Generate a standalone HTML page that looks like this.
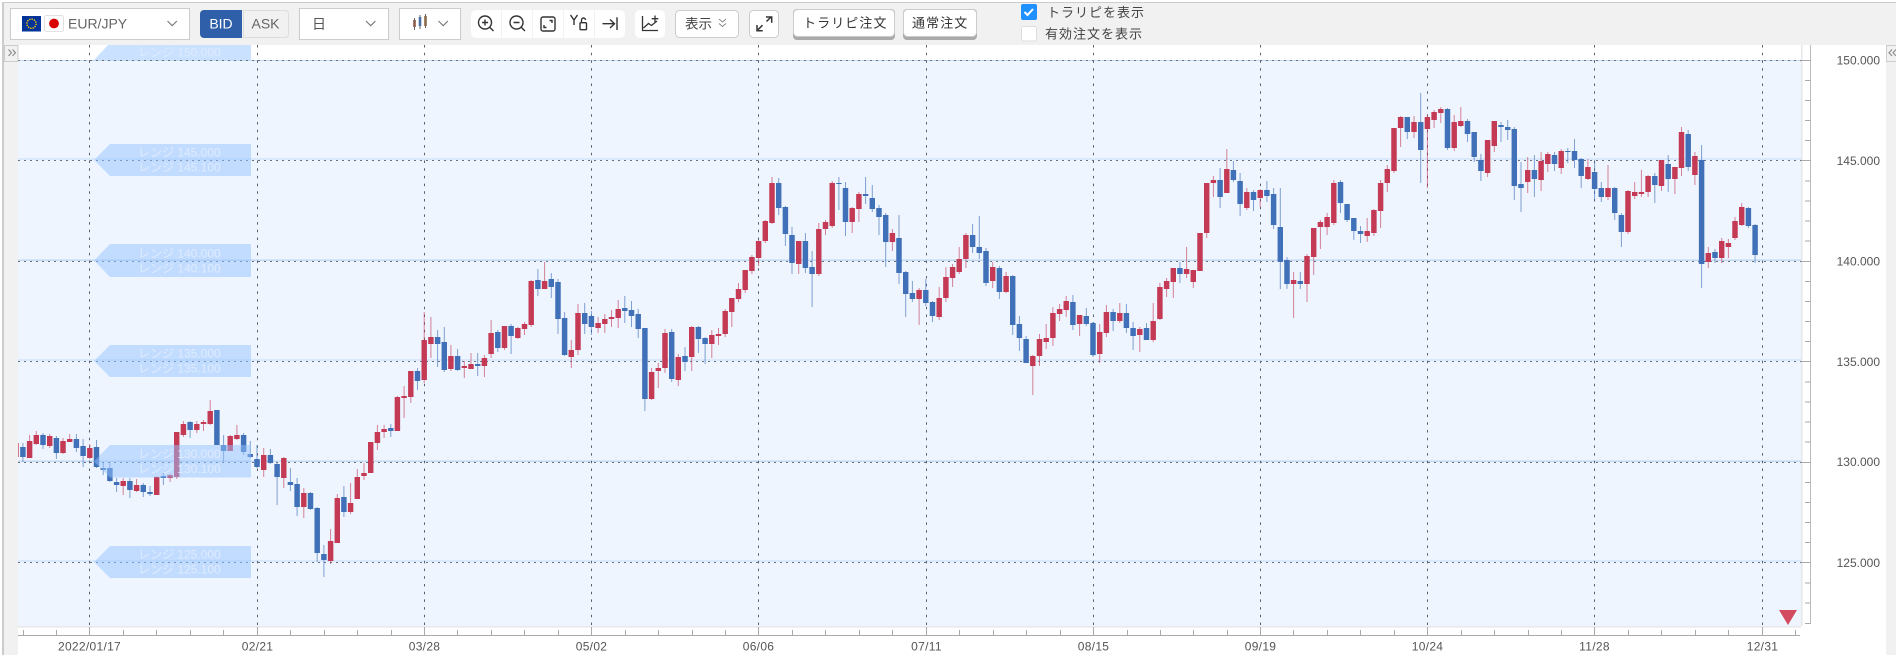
<!DOCTYPE html>
<html lang="ja"><head><meta charset="utf-8"><title>EUR/JPY</title>
<style>html,body{margin:0;padding:0;background:#fff;width:1896px;height:655px;overflow:hidden}svg{display:block}text{font-family:"Liberation Sans","Noto Sans CJK JP",sans-serif}</style></head><body>
<svg width="1896" height="655" viewBox="0 0 1896 655" xmlns="http://www.w3.org/2000/svg">
<defs><clipPath id="cp"><rect x="18" y="45" width="1783" height="581"/></clipPath><clipPath id="cr"><rect x="1886" y="45" width="10" height="17"/></clipPath></defs>
<rect width="1896" height="655" fill="#fff"/>
<rect x="3" y="2" width="1893" height="43" fill="#f1f1f1"/><rect x="2" y="2" width="1894" height="1" fill="#ccc"/>
<rect x="2" y="2" width="2" height="653" fill="#ccc"/><rect x="4" y="45" width="14" height="610" fill="#f1f1f1"/>
<rect x="1886" y="45" width="10" height="610" fill="#f1f1f1"/>
<!-- chart background -->
<rect x="18" y="60" width="1783" height="566" fill="#eef5ff"/>
<g fill="#d9e8fb"><rect x="18" y="158" width="1783" height="2"/><rect x="18" y="359" width="1783" height="2"/><rect x="18" y="560" width="1783" height="2"/></g>
<g fill="#c3d9f2"><rect x="18" y="60" width="1783" height="1"/><rect x="18" y="259.5" width="1783" height="1.5"/><rect x="18" y="460.5" width="1783" height="1.5"/></g>
<path d="M89.5 45V626M257.5 45V626M424.5 45V626M591.5 45V626M758.5 45V626M926.5 45V626M1093.5 45V626M1260.5 45V626M1427.5 45V626M1594.5 45V626M1762.5 45V626" stroke="#5a5f68" stroke-width="1" stroke-dasharray="2.5 5.2" fill="none"/>
<path d="M18 60.5H1801M18 160.5H1801M18 261.5H1801M18 361.5H1801M18 462.5H1801M18 562.5H1801" stroke="#66717f" stroke-width="1" stroke-dasharray="2 4" fill="none"/>
<!-- candles -->
<g clip-path="url(#cp)" fill="none" transform="translate(.3 0)">
<path id="rw" stroke="#c43a55" stroke-width="1" opacity=".62" d="M15.9 437V459M29.3 435V458M36 431V445M49.4 434V448M62.7 438V454M69.4 434V442M89.5 444V459M122.9 478V495M136.3 479V492M156.4 476V495M169.8 474V482M176.4 432V479M183.1 421V437M196.5 421V433M203.2 420V431M209.9 400V425M229.9 435V451M236.6 425V440M263.4 448V477M283.5 457V488M303.5 488V518M330.3 529V564M337 494V543M350.3 483V514M357 469V499M363.7 463V480M370.4 442V473M377.1 425V450M383.8 425V438M397.1 396V431M403.8 386V418M410.5 371V403M423.9 312V383M430.6 317V358M450.6 345V371M464 361V378M470.7 353V369M484.1 355V377M490.8 320V358M504.2 326V350M517.5 327V339M524.2 322V335M530.9 280V327M544.3 262V289M571 340V368M577.7 304V355M597.8 317V333M604.5 314V333M611.2 310V327M617.9 300V328M651.3 368V400M658 363V388M664.7 329V373M678 354V386M691.4 326V371M711.5 330V358M718.2 328V345M724.9 309V337M731.5 298V327M738.2 283V302M744.9 270V293M751.6 255V274M758.3 240V266M765 220V243M771.7 177V224M798.4 241V274M818.5 223V276M825.2 220V235M831.9 181V228M851.9 207V233M858.6 192V222M892.1 229V251M918.8 288V325M938.9 287V320M945.6 267V302M952.3 264V287M958.9 247V274M965.6 233V268M992.4 262V288M1005.8 272V293M1032.5 355V395M1039.2 334V366M1045.9 324V349M1052.6 307V346M1059.3 304V321M1065.9 296V317M1079.3 315V336M1099.4 324V363M1106.1 305V337M1119.5 303V323M1139.5 327V352M1152.9 303V342M1159.6 283V320M1166.3 278V297M1173 268V298M1186.3 247V278M1193 270V288M1199.7 233V271M1206.4 183V238M1213.1 176V197M1226.5 149V193M1246.5 188V210M1259.9 189V207M1293.3 272V318M1306.7 254V302M1313.4 228V275M1320.1 220V249M1326.8 213V235M1333.5 180V225M1366.9 218V242M1373.6 209V236M1380.3 180V228M1387 165V192M1393.7 128V173M1400.3 116V147M1413.7 116V138M1427.1 115V188M1433.8 110V128M1440.5 107V123M1453.9 115V151M1460.5 107V127M1487.3 140V177M1494 121V152M1527.4 157V193M1540.8 152V191M1547.5 152V172M1560.9 149V174M1587.6 159V180M1607.7 165V200M1627.7 190V234M1634.4 182V199M1641.1 170V197M1647.8 175V197M1661.2 160V191M1674.6 167V194M1681.2 127V176M1694.6 152V185M1708 247V268M1721.4 238V263M1728.1 239V258M1734.7 217V240M1741.4 203V226"/>
<path id="bw" stroke="#4070b8" stroke-width="1" opacity=".65" d="M22.6 443V462M42.7 433V449M56.1 436V459M76.1 434V452M82.8 439V467M96.2 440V468M102.9 462V475M109.6 462V482M116.3 478V492M129.6 478V498M143 483V497M149.7 486V496M163.1 473V485M189.8 421V438M216.6 410V445M223.3 435V462M243.3 433V455M250 441V458M256.7 445V468M270.1 449V464M276.8 463V505M290.1 468V491M296.8 478V516M310.2 492V510M316.9 507V562M323.6 545V577M343.6 486V517M390.5 424V437M417.2 368V390M437.3 330V367M444 327V372M457.3 349V371M477.4 353V376M497.5 330V352M510.8 324V354M537.6 269V296M551 273V298M557.7 279V334M564.3 312V356M584.4 303V334M591.1 311V335M624.5 296V323M631.2 301V327M637.9 309V338M644.6 328V411M671.4 329V382M684.7 347V371M698.1 326V353M704.8 337V364M778.4 178V215M785.1 206V246M791.7 227V274M805.1 233V273M811.8 251V307M838.6 177V210M845.2 182V236M865.3 177V204M872 185V212M878.7 205V235M885.4 213V267M898.7 215V284M905.4 271V317M912.1 281V302M925.5 279V306M932.2 301V322M972.3 224V253M979 216V259M985.7 248V286M999.1 266V299M1012.4 275V335M1019.1 316V351M1025.8 336V363M1072.6 295V330M1086 308V326M1092.7 322V357M1112.8 309V331M1126.1 304V333M1132.8 322V350M1146.2 323V340M1179.6 262V283M1219.8 168V208M1233.1 161V182M1239.8 173V216M1253.2 190V211M1266.6 181V202M1273.3 188V229M1280 188V289M1286.7 257V289M1300 272V289M1340.2 180V213M1346.8 204V222M1353.5 218V240M1360.2 226V243M1407 117V139M1420.4 93V183M1447.2 108V150M1467.2 119V142M1473.9 132V162M1480.6 154V181M1500.7 122V142M1507.4 120V140M1514 127V200M1520.7 162V212M1534.1 155V197M1554.2 152V171M1567.5 148V163M1574.2 139V168M1580.9 158V188M1594.3 162V201M1601 182V202M1614.4 187V220M1621.1 213V247M1654.5 173V203M1667.9 155V192M1687.9 130V171M1701.3 145V288M1714.7 249V263M1748.1 207V228M1754.8 224V263"/>
<path id="rb" stroke="#c43a55" stroke-width="5.4" d="M15.9 443V457M29.3 441V458M36 435V444M49.4 436V446M62.7 441V453M69.4 439V442M89.5 448V458M122.9 481V486M136.3 485V491M156.4 477V495M169.8 475V478M176.4 432V477M183.1 424V435M196.5 424V430M203.2 422V424M209.9 411V424M229.9 436V451M236.6 435V439M263.4 455V470M283.5 458V478M303.5 493V507M330.3 541V561M337 498V543M350.3 503V512M357 477V499M363.7 473V476M370.4 442V473M377.1 432V443M383.8 429V432M397.1 397V431M403.8 396V398M410.5 371V397M423.9 340V380M430.6 337V344M450.6 356V369M464 366V368M470.7 364V369M484.1 358V366M490.8 333V354M504.2 326V348M517.5 328V338M524.2 324V329M530.9 281V325M544.3 281V289M571 350V357M577.7 313V350M597.8 323V328M604.5 319V324M611.2 317V319M617.9 309V318M651.3 372V399M658 368V371M664.7 333V368M678 357V380M691.4 327V357M711.5 335V344M718.2 334V336M724.9 311V334M731.5 298V312M738.2 289V299M744.9 270V290M751.6 257V271M758.3 241V258M765 221V241M771.7 183V223M798.4 241V264M818.5 229V274M825.2 222V229M831.9 183V226M851.9 208V222M858.6 194V209M892.1 233V242M918.8 290V299M938.9 298V317M945.6 277V298M952.3 267V278M958.9 259V272M965.6 235V259M992.4 267V281M1005.8 276V292M1032.5 356V366M1039.2 339V356M1045.9 338V342M1052.6 313V338M1059.3 309V314M1065.9 301V310M1079.3 315V324M1099.4 332V354M1106.1 312V333M1119.5 313V321M1139.5 329V335M1152.9 321V340M1159.6 287V319M1166.3 281V289M1173 268V282M1186.3 269V274M1193 270V282M1199.7 233V271M1206.4 183V233M1213.1 180V183M1226.5 169V193M1246.5 192V208M1259.9 190V198M1293.3 280V284M1306.7 256V284M1313.4 228V257M1320.1 222V227M1326.8 217V227M1333.5 183V223M1366.9 231V236M1373.6 210V233M1380.3 183V211M1387 169V183M1393.7 128V171M1400.3 117V128M1413.7 122V132M1427.1 117V129M1433.8 112V120M1440.5 109V113M1453.9 122V148M1460.5 121V126M1487.3 140V173M1494 121V146M1527.4 170V182M1540.8 161V180M1547.5 154V164M1560.9 151V168M1587.6 167V179M1607.7 188V197M1627.7 191V232M1634.4 192V196M1641.1 192V194M1647.8 176V192M1661.2 160V186M1674.6 167V179M1681.2 132V168M1694.6 156V175M1708 253V262M1721.4 241V258M1728.1 243V247M1734.7 221V238M1741.4 207V225"/>
<path id="bb" stroke="#4070b8" stroke-width="5.4" d="M22.6 447V457M42.7 435V445M56.1 438V453M76.1 439V448M82.8 446V456M96.2 447V467M102.9 468V470M109.6 468V481M116.3 482V485M129.6 481V490M143 485V492M149.7 492V494M163.1 476V478M189.8 422V430M216.6 410V445M223.3 445V451M243.3 435V452M250 454V457M256.7 459V467M270.1 455V463M276.8 464V477M290.1 482V485M296.8 484V507M310.2 493V509M316.9 508V553M323.6 554V560M343.6 497V512M390.5 428V431M417.2 371V381M437.3 337V344M444 342V370M457.3 356V370M477.4 364V366M497.5 332V348M510.8 326V336M537.6 280V289M551 279V287M557.7 282V319M564.3 318V355M584.4 313V324M591.1 316V327M624.5 308V311M631.2 310V316M637.9 314V329M644.6 328V399M671.4 332V379M684.7 356V362M698.1 327V339M704.8 338V344M778.4 183V208M785.1 207V234M791.7 235V263M805.1 241V268M811.8 267V274M838.6 183V184M845.2 188V222M865.3 194V196M872 198V209M878.7 208V217M885.4 215V242M898.7 238V273M905.4 272V294M912.1 293V299M925.5 290V303M932.2 302V316M972.3 235V247M979 247V253M985.7 251V283M999.1 268V292M1012.4 276V325M1019.1 324V338M1025.8 339V363M1072.6 302V325M1086 316V324M1092.7 323V355M1112.8 312V321M1126.1 313V328M1132.8 328V336M1146.2 328V340M1179.6 268V274M1219.8 180V197M1233.1 170V180M1239.8 181V204M1253.2 192V200M1266.6 190V196M1273.3 194V225M1280 227V262M1286.7 260V284M1300 281V284M1340.2 182V203M1346.8 204V220M1353.5 218V231M1360.2 231V234M1407 117V132M1420.4 122V150M1447.2 109V148M1467.2 121V134M1473.9 132V157M1480.6 160V171M1500.7 125V127M1507.4 127V130M1514 129V186M1520.7 184V188M1534.1 170V179M1554.2 155V164M1567.5 151V152M1574.2 151V160M1580.9 159V176M1594.3 172V189M1601 188V197M1614.4 188V213M1621.1 215V232M1654.5 176V185M1667.9 164V179M1687.9 134V167M1701.3 160V264M1714.7 252V258M1748.1 208V226M1754.8 225V255"/>
<use href="#rb" stroke-width="6.8" opacity=".3"/>
<use href="#bb" stroke-width="6.8" opacity=".3"/>
</g>
<!-- range labels -->
<g fill="#96c3ff" fill-opacity=".5">
<path d="M108 45H251V60H94z"/>
<path d="M110 144H251V176H110L94 160z"/>
<path d="M110 244H251V277H110L94 260.5z"/>
<path d="M110 345H251V377H110L94 361z"/>
<path d="M110 445H251V477.5H110L94 461.5z"/>
<path d="M110 546H251V578H110L94 562z"/>
</g>
<g font-size="12" fill="#dfebff">
<text x="138" y="56.5">レンジ 150.000</text>
<text x="138" y="156.5">レンジ 145.000</text><text x="138" y="171.5">レンジ 145.100</text>
<text x="138" y="257.5">レンジ 140.000</text><text x="138" y="272.5">レンジ 140.100</text>
<text x="138" y="357.5">レンジ 135.000</text><text x="138" y="372.5">レンジ 135.100</text>
<text x="138" y="458">レンジ 130.000</text><text x="138" y="473">レンジ 130.100</text>
<text x="138" y="558.5">レンジ 125.000</text><text x="138" y="573.5">レンジ 125.100</text>
</g>
<!-- triangle -->
<path d="M1779 610H1797L1788 625z" fill="#d24b5e"/>
<!-- axes -->
<rect x="1801" y="45" width="1.5" height="581" fill="#e4e6ea"/>
<rect x="18" y="626" width="1783" height="1.5" fill="#e6e8ea"/>
<rect x="18" y="635" width="1782" height="1" fill="#aaa"/>
<rect x="1810" y="45" width="1" height="579" fill="#bbb"/>
<path stroke="#aaa" stroke-width="1" fill="none" d="M1801 60.5H1811M1801 160.5H1811M1801 261.5H1811M1801 361.5H1811M1801 462.5H1811M1801 562.5H1811M1805 80.5H1810M1805 100.5H1810M1805 120.5H1810M1805 140.5H1810M1805 181H1810M1805 201H1810M1805 221H1810M1805 241H1810M1805 281.5H1810M1805 301.5H1810M1805 321.5H1810M1805 341.5H1810M1805 382H1810M1805 402H1810M1805 422H1810M1805 442H1810M1805 482.5H1810M1805 502.5H1810M1805 522.5H1810M1805 542.5H1810M1805 583H1810M1805 603H1810M1805 623.5H1810"/>
<path stroke="#aaa" stroke-width="1" fill="none" d="M89.5 627V635M257.5 627V635M424.5 627V635M591.5 627V635M758.5 627V635M926.5 627V635M1093.5 627V635M1260.5 627V635M1427.5 627V635M1594.5 627V635M1762.5 627V635M23.5 630V635M56.5 630V635M123.5 630V635M156.5 630V635M190.5 630V635M223.5 630V635M290.5 630V635M324.5 630V635M357.5 630V635M391.5 630V635M457.5 630V635M491.5 630V635M524.5 630V635M558.5 630V635M625.5 630V635M658.5 630V635M692.5 630V635M725.5 630V635M792.5 630V635M825.5 630V635M859.5 630V635M892.5 630V635M959.5 630V635M993.5 630V635M1026.5 630V635M1060.5 630V635M1127.5 630V635M1160.5 630V635M1193.5 630V635M1227.5 630V635M1293.5 630V635M1327.5 630V635M1360.5 630V635M1394.5 630V635M1461.5 630V635M1494.5 630V635M1528.5 630V635M1561.5 630V635M1628.5 630V635M1661.5 630V635M1695.5 630V635M1728.5 630V635M1795.5 630V635"/>
<g font-size="12" fill="#555" text-anchor="end">
<text x="1880" y="64.5">150.000</text><text x="1880" y="165">145.000</text><text x="1880" y="265.5">140.000</text><text x="1880" y="366">135.000</text><text x="1880" y="466">130.000</text><text x="1880" y="567">125.000</text>
</g>
<g font-size="12" fill="#555" text-anchor="middle" letter-spacing=".3">
<text x="89.5" y="650.5">2022/01/17</text><text x="257.5" y="650.5">02/21</text><text x="424.5" y="650.5">03/28</text><text x="591.5" y="650.5">05/02</text><text x="758.5" y="650.5">06/06</text><text x="926.5" y="650.5">07/11</text><text x="1093.5" y="650.5">08/15</text><text x="1260.5" y="650.5">09/19</text><text x="1427.5" y="650.5">10/24</text><text x="1594.5" y="650.5">11/28</text><text x="1762.5" y="650.5">12/31</text>
</g>
<!-- side buttons -->
<rect x="4.5" y="45.5" width="13.5" height="16" fill="#f1f1f1" stroke="#ccc"/>
<path d="M8.5 49.5l3 3.2-3 3.2M12.5 49.5l3 3.2-3 3.2" stroke="#888" stroke-width="1.1" fill="none"/>
<g clip-path="url(#cr)"><rect x="1886.5" y="45.5" width="12" height="16" fill="#f1f1f1" stroke="#ccc"/><path d="M1892 49.5l-3 3.2 3 3.2M1896 49.5l-3 3.2 3 3.2" stroke="#888" stroke-width="1.1" fill="none"/></g>
<!-- toolbar: pair selector -->
<rect x="10.5" y="8.5" width="179" height="31" fill="#fff" stroke="#ccc"/>
<rect x="22" y="16" width="19" height="15.5" fill="#039"/>
<circle cx="31.5" cy="23.7" r="4.6" fill="none" stroke="#fc0" stroke-width="1.5" stroke-dasharray="1.3 1.1"/>
<rect x="44.5" y="15.5" width="19" height="16" rx="2" fill="#fff" stroke="#e2e2e2"/>
<circle cx="54" cy="23.5" r="4.9" fill="#d90000"/>
<text x="68" y="28.5" font-size="14" fill="#666">EUR/JPY</text>
<path d="M167.5 21l4.7 4.7 4.7-4.7" stroke="#777" stroke-width="1.1" fill="none"/>
<!-- BID / ASK -->
<path d="M204 10H242V38H204a4 4 0 0 1-4-4V14a4 4 0 0 1 4-4z" fill="#2f5fa8"/>
<text x="221" y="28.5" font-size="14" fill="#fff" text-anchor="middle">BID</text>
<path d="M243.5 10.5H285a3.5 3.5 0 0 1 3.5 3.5V34a3.5 3.5 0 0 1-3.5 3.5H243.5z" fill="#f1f1f1" stroke="#ddd"/>
<text x="265.5" y="28.5" font-size="14" fill="#666" text-anchor="middle">ASK</text>
<!-- period -->
<rect x="299.5" y="8.5" width="89" height="31" fill="#fff" stroke="#ccc"/>
<text x="312" y="29" font-size="14" fill="#555">日</text>
<path d="M366 21l4.7 4.7 4.7-4.7" stroke="#777" stroke-width="1.1" fill="none"/>
<!-- chart type -->
<rect x="399.5" y="8.5" width="61" height="31" fill="#fff" stroke="#ccc"/>
<path d="M414.5 18V30M420 15V29M425.5 14V28" stroke="#666" stroke-width="1" fill="none"/>
<path d="M414.5 20V27" stroke="#8a5a4a" stroke-width="2.6" fill="none"/><path d="M420 17V26" stroke="#4a6fa5" stroke-width="2.6" fill="none"/><path d="M425.5 16V26" stroke="#8a6a4a" stroke-width="2.6" fill="none"/>
<path d="M438.5 21l4.7 4.7 4.7-4.7" stroke="#777" stroke-width="1.1" fill="none"/>
<!-- icon group -->
<rect x="471" y="10" width="154" height="28" rx="5" fill="#fff"/>
<path d="M501.5 10V38M532.5 10V38M563.5 10V38M594.5 10V38" stroke="#f2f2f2" stroke-width="1"/>
<g fill="none" stroke="#333" stroke-width="1.4">
<circle cx="485" cy="22.5" r="6.5"/><path d="M489.7 27.2L493.5 31M482 22.5H488M485 19.5V25.5"/>
<circle cx="516.5" cy="22.5" r="6.5"/><path d="M521.2 27.2L525 31M513.5 22.5H519.5"/>
<rect x="541" y="17" width="14" height="14" rx="2"/><path d="M549.5 20.5H552V23M544 25V27.5H546.5"/>
<path d="M570.5 15L574 20L577.5 15M574 20V25"/>
<rect x="580" y="22.7" width="6.5" height="7" rx="1"/><path d="M581.5 22.7V20a2 2 0 0 1 4 0"/>
<path d="M602.5 23.7H614.5M610 19.5L614.5 23.7L610 28M617 17.3V30"/>
</g>
<rect x="635" y="10" width="30" height="28" rx="5" fill="#fff"/>
<g fill="none" stroke="#333" stroke-width="1.3"><path d="M642.5 16V30.5H658M643.5 28L648.5 23.5L651.5 25.5L657 21M655 15.5V22M651.7 18.7H658.3"/></g>
<!-- display button -->
<rect x="675.5" y="10.5" width="63" height="27" rx="4" fill="#fff" stroke="#ccc"/>
<text x="685" y="28.5" font-size="13.5" fill="#444">表示</text>
<path d="M719 19l3.5 3 3.500-3M719 23.500l3.500 3 3.500-3" stroke="#888" stroke-width="1" fill="none"/>
<rect x="749.5" y="10.5" width="29" height="27" rx="4" fill="#fff" stroke="#ccc"/>
<path d="M766 17H771.7V22.7M757 25V30.7H762.7M758 29.700L762.500 25.200M766.500 21.500L771 17" stroke="#333" stroke-width="1.5" fill="none"/>
<!-- order buttons -->
<rect x="793" y="9" width="102" height="31" rx="4" fill="#aaa"/><rect x="793.5" y="9.5" width="101" height="27" rx="4" fill="#fff" stroke="#ccc"/>
<text x="803" y="27.5" font-size="13" fill="#333" letter-spacing="1.1">トラリピ注文</text>
<rect x="903" y="9" width="74" height="31" rx="4" fill="#aaa"/><rect x="903.5" y="9.5" width="73" height="27" rx="4" fill="#fff" stroke="#ccc"/>
<text x="912" y="27.5" font-size="13" fill="#333" letter-spacing="1.1">通常注文</text>
<!-- checkboxes -->
<rect x="1021" y="4" width="16" height="16" rx="2" fill="#1e90ff"/>
<path d="M1024.5 12l3 3 5.5-6" stroke="#fff" stroke-width="2" fill="none"/>
<text x="1047" y="17" font-size="13" fill="#444" letter-spacing="1">トラリピを表示</text>
<rect x="1021.5" y="26.5" width="15" height="14.5" rx="2" fill="#fff" stroke="#ddd"/>
<text x="1045" y="38.5" font-size="13" fill="#444" letter-spacing="1">有効注文を表示</text>
</svg>
</body></html>
